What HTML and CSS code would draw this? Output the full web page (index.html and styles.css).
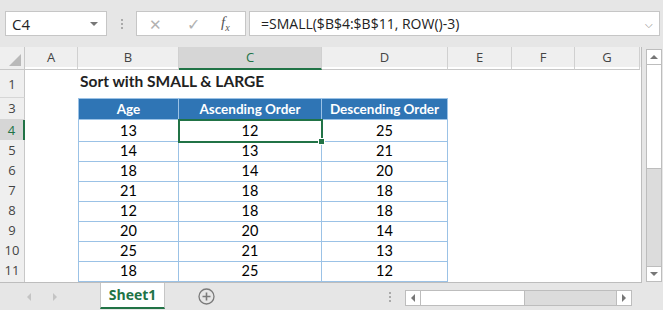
FILE: index.html
```html
<!DOCTYPE html>
<html lang="en">
<head>
    <meta charset="UTF-8">
    <title>Sort with SMALL &amp; LARGE</title>
    <link rel="stylesheet" href="styles.css">
</head>
<body>
    <div class="toolbar">
        <div class="namebox">
            <span>C4</span>
            <span class="drop"></span>
        </div>
        <div class="grip"></div>
        <div class="fxbox">
            <span class="btn-x">&#x2715;</span>
            <span class="btn-ok">&#x2713;</span>
            <span class="btn-fx">f<sub>x</sub></span>
        </div>
        <div class="formula">
            <span>=SMALL($B$4:$B$11, ROW()-3)</span>
            <span class="chev">&#x2335;</span>
        </div>
    </div>

    <div class="workarea">
        <div class="sheet">
            <div class="row head">
                <div class="corner"></div>
                <div class="col">A</div>
                <div class="col">B</div>
                <div class="col sel">C</div>
                <div class="col">D</div>
                <div class="col">E</div>
                <div class="col">F</div>
                <div class="col">G</div>
            </div>
            <div class="row r1">
                <div class="rh">1</div>
                <div></div>
                <div class="title">Sort with SMALL &amp; LARGE</div>
                <div></div><div></div><div></div><div></div><div></div>
            </div>
            <div class="row r2">
                <div class="rh"></div>
                <div></div><div></div><div></div><div></div><div></div><div></div><div></div>
            </div>
            <div class="row r3">
                <div class="rh">3</div>
                <div></div>
                <div class="t th first">Age</div>
                <div class="t th">Ascending Order</div>
                <div class="t th">Descending Order</div>
                <div></div><div></div><div></div>
            </div>
            <div class="row">
                <div class="rh on">4</div>
                <div></div>
                <div class="t first">13</div>
                <div class="t active">12</div>
                <div class="t">25</div>
                <div></div><div></div><div></div>
            </div>
            <div class="row">
                <div class="rh">5</div>
                <div></div>
                <div class="t first">14</div>
                <div class="t">13</div>
                <div class="t">21</div>
                <div></div><div></div><div></div>
            </div>
            <div class="row">
                <div class="rh">6</div>
                <div></div>
                <div class="t first">18</div>
                <div class="t">14</div>
                <div class="t">20</div>
                <div></div><div></div><div></div>
            </div>
            <div class="row">
                <div class="rh">7</div>
                <div></div>
                <div class="t first">21</div>
                <div class="t">18</div>
                <div class="t">18</div>
                <div></div><div></div><div></div>
            </div>
            <div class="row">
                <div class="rh">8</div>
                <div></div>
                <div class="t first">12</div>
                <div class="t">18</div>
                <div class="t">18</div>
                <div></div><div></div><div></div>
            </div>
            <div class="row">
                <div class="rh">9</div>
                <div></div>
                <div class="t first">20</div>
                <div class="t">20</div>
                <div class="t">14</div>
                <div></div><div></div><div></div>
            </div>
            <div class="row">
                <div class="rh">10</div>
                <div></div>
                <div class="t first">25</div>
                <div class="t">21</div>
                <div class="t">13</div>
                <div></div><div></div><div></div>
            </div>
            <div class="row">
                <div class="rh">11</div>
                <div></div>
                <div class="t first">18</div>
                <div class="t">25</div>
                <div class="t">12</div>
                <div></div><div></div><div></div>
            </div>
            <div class="row r12">
                <div class="rh"></div>
                <div></div><div></div><div></div><div></div><div></div><div></div><div></div>
            </div>
        </div>

        <div class="vscroll">
            <div class="sbtn up"></div>
            <div class="vthumb"></div>
            <div class="vtrack"></div>
            <div class="sbtn down"></div>
        </div>
    </div>

    <div class="tabbar">
        <div class="nav">
            <span class="arr left"></span>
            <span class="arr right"></span>
        </div>
        <div class="tab">Sheet1</div>
        <div class="add">
            <svg width="17" height="17" viewBox="0 0 17 17">
                <circle cx="8.5" cy="8.5" r="7.5" fill="none" stroke="#7a7a7a" stroke-width="1.3"/>
                <path d="M8.5 4.5v8M4.5 8.5h8" stroke="#7a7a7a" stroke-width="1.6"/>
            </svg>
        </div>
        <div class="grip small"></div>
        <div class="hscroll">
            <div class="sbtn hl"></div>
            <div class="hthumb"></div>
            <div class="htrack"></div>
            <div class="sbtn hr"></div>
        </div>
    </div>
</body>
</html>
```

FILE: styles.css
```css
body {
    margin: 0;
    width: 663px;
    height: 310px;
    overflow: hidden;
    background: #e6e6e6;
    font-family: "Open Sans", "Noto Sans", sans-serif;
    color: #222;
}

/* formula bar */
.toolbar {
    height: 47px;
    display: flex;
    align-items: flex-start;
    padding: 11px 0 0 5px;
    box-sizing: border-box;
}

.namebox, .fxbox, .formula {
    height: 25px;
    box-sizing: border-box;
    background: #fff;
    border: 1px solid #c6c6c6;
    display: flex;
    align-items: center;
    font-size: 14px;
}

.namebox {
    width: 102px;
    padding: 0 6px 0 6px;
    justify-content: space-between;
    font-size: 15px;
}

.drop {
    width: 0;
    height: 0;
    border-left: 4px solid transparent;
    border-right: 4px solid transparent;
    border-top: 4px solid #777;
    margin-right: 2px;
}

.grip {
    width: 2px;
    height: 12px;
    margin: 7px 13px 0 14px;
    background-image: radial-gradient(circle, #aaa 1px, transparent 1px);
    background-size: 2px 4px;
}

.fxbox {
    width: 110px;
    padding: 0 0 0 12px;
    color: #b2b2b2;
}

.btn-x {
    font-size: 15px;
    width: 38px;
}

.btn-ok {
    font-size: 16px;
    width: 34px;
}

.btn-fx {
    font-family: "Liberation Serif", serif;
    font-style: italic;
    color: #555;
    font-size: 15px;
}

.btn-fx sub {
    font-size: 10px;
}

.formula {
    width: 411px;
    margin-left: 3px;
    padding: 0 6px 0 11px;
    justify-content: space-between;
    color: #222;
}

.chev {
    color: #888;
    font-size: 10px;
}

/* grid */
.workarea {
    height: 236px;
    display: flex;
}

.sheet {
    width: 642px;
    background: #fff;
    border-right: 1px solid #bdbdbd;
    border-bottom: 1px solid #bdbdbd;
    box-sizing: border-box;
    overflow: hidden;
    font-family: Lato, "Liberation Sans", sans-serif;
    font-size: 14.5px;
}

.row {
    display: grid;
    grid-template-columns: 25px 53px 101px 143px 126px 64px 63px 65px;
    height: 20px;
}

.row > div {
    box-sizing: border-box;
    line-height: 21px;
}

.row.head {
    background: #efefef;
}

.row.r1 {
    height: 26px;
}

.row.r2 {
    height: 5px;
}

.row.r3 {
    height: 22px;
}

.row.r12 {
    height: 3px;
}

.corner {
    position: relative;
    border-right: 1px solid #c8c8c8;
    border-bottom: 1px solid #c8c8c8;
}

.corner::after {
    content: "";
    position: absolute;
    right: 3px;
    bottom: 3px;
    border-left: 12px solid transparent;
    border-bottom: 12px solid #b9b9b9;
}

.col {
    text-align: center;
    font-family: "Open Sans", sans-serif;
    font-size: 13px;
    color: #444;
    border-right: 1px solid #d0d0d0;
    border-bottom: 1px solid #c8c8c8;
}

.col.sel {
    background: #d6d6d6;
    border-bottom: 2px solid #217346;
    color: #217346;
}

.rh {
    background: #efefef;
    text-align: center;
    font-family: "Open Sans", sans-serif;
    font-size: 13px;
    color: #444;
    border-right: 1px solid #c8c8c8;
    border-bottom: 1px solid #d6d6d6;
    overflow: hidden;
}

.r1 .rh {
    line-height: 34px !important;
}

.rh.on {
    background: #d6d6d6;
    border-right: 2px solid #217346;
    color: #217346;
}

.title {
    font-weight: bold;
    font-size: 15.5px;
    white-space: nowrap;
    padding-left: 2px;
    line-height: 28px !important;
}

.t {
    text-align: center;
    color: #000;
    border-right: 1px solid #9bc2e6;
    border-bottom: 1px solid #9bc2e6;
}

.t.first {
    border-left: 1px solid #9bc2e6;
}

.t.th {
    background: #2f75b5;
    color: #fff;
    font-weight: bold;
    font-size: 13.5px;
    border-top: 1px solid #9bc2e6;
    line-height: 20px !important;
}

.t.active {
    position: relative;
    z-index: 1;
    outline: 2px solid #217346;
    outline-offset: -1px;
}

.t.active::after {
    content: "";
    position: absolute;
    right: -4px;
    bottom: -4px;
    width: 5px;
    height: 5px;
    background: #217346;
    border: 1px solid #fff;
}

/* scrollbars */
.vscroll {
    width: 16px;
    margin: 2px 0 1px 4px;
    display: flex;
    flex-direction: column;
    border: 1px solid #bdbdbd;
    box-sizing: border-box;
    background: #dcdcdc;
}

.sbtn {
    background: #fff;
    position: relative;
    box-sizing: border-box;
}

.sbtn.up, .sbtn.down {
    height: 15px;
}

.sbtn.up {
    border-bottom: 1px solid #bdbdbd;
}

.sbtn.down {
    border-top: 1px solid #bdbdbd;
}

.sbtn::after {
    content: "";
    position: absolute;
    left: 50%;
    top: 50%;
    transform: translate(-50%, -50%);
}

.sbtn.up::after {
    border-left: 4px solid transparent;
    border-right: 4px solid transparent;
    border-bottom: 4px solid #777;
}

.sbtn.down::after {
    border-left: 4px solid transparent;
    border-right: 4px solid transparent;
    border-top: 4px solid #777;
}

.vthumb {
    height: 103px;
    background: #fff;
    border-bottom: 1px solid #bdbdbd;
}

.vtrack {
    flex: 1;
}

/* sheet tabs */
.tabbar {
    height: 27px;
    display: flex;
    align-items: flex-start;
}

.nav {
    width: 100px;
    display: flex;
    padding: 10px 0 0 27px;
    box-sizing: border-box;
    gap: 22px;
}

.arr {
    width: 0;
    height: 0;
    border-top: 4px solid transparent;
    border-bottom: 4px solid transparent;
}

.arr.left {
    border-right: 4px solid #c4c4c4;
}

.arr.right {
    border-left: 4px solid #c4c4c4;
}

.tab {
    width: 65px;
    height: 26px;
    box-sizing: border-box;
    background: #fff;
    border-left: 1px solid #c6c6c6;
    border-right: 1px solid #c6c6c6;
    border-bottom: 2px solid #217346;
    color: #217346;
    font-weight: bold;
    font-size: 14px;
    text-align: center;
    line-height: 24px;
}

.add {
    margin: 5px 0 0 33px;
    height: 17px;
}

.grip.small {
    margin: 8px 14px 0 174px;
    height: 12px;
}

.hscroll {
    width: 227px;
    height: 16px;
    margin-top: 7px;
    display: flex;
    border: 1px solid #bdbdbd;
    box-sizing: border-box;
    background: #dcdcdc;
}

.sbtn.hl, .sbtn.hr {
    width: 15px;
}

.sbtn.hl {
    border-right: 1px solid #bdbdbd;
}

.sbtn.hr {
    border-left: 1px solid #bdbdbd;
}

.sbtn.hl::after {
    border-top: 4px solid transparent;
    border-bottom: 4px solid transparent;
    border-right: 4px solid #777;
}

.sbtn.hr::after {
    border-top: 4px solid transparent;
    border-bottom: 4px solid transparent;
    border-left: 4px solid #777;
}

.hthumb {
    width: 103px;
    background: #fff;
    border-right: 1px solid #bdbdbd;
}

.htrack {
    flex: 1;
}
```
